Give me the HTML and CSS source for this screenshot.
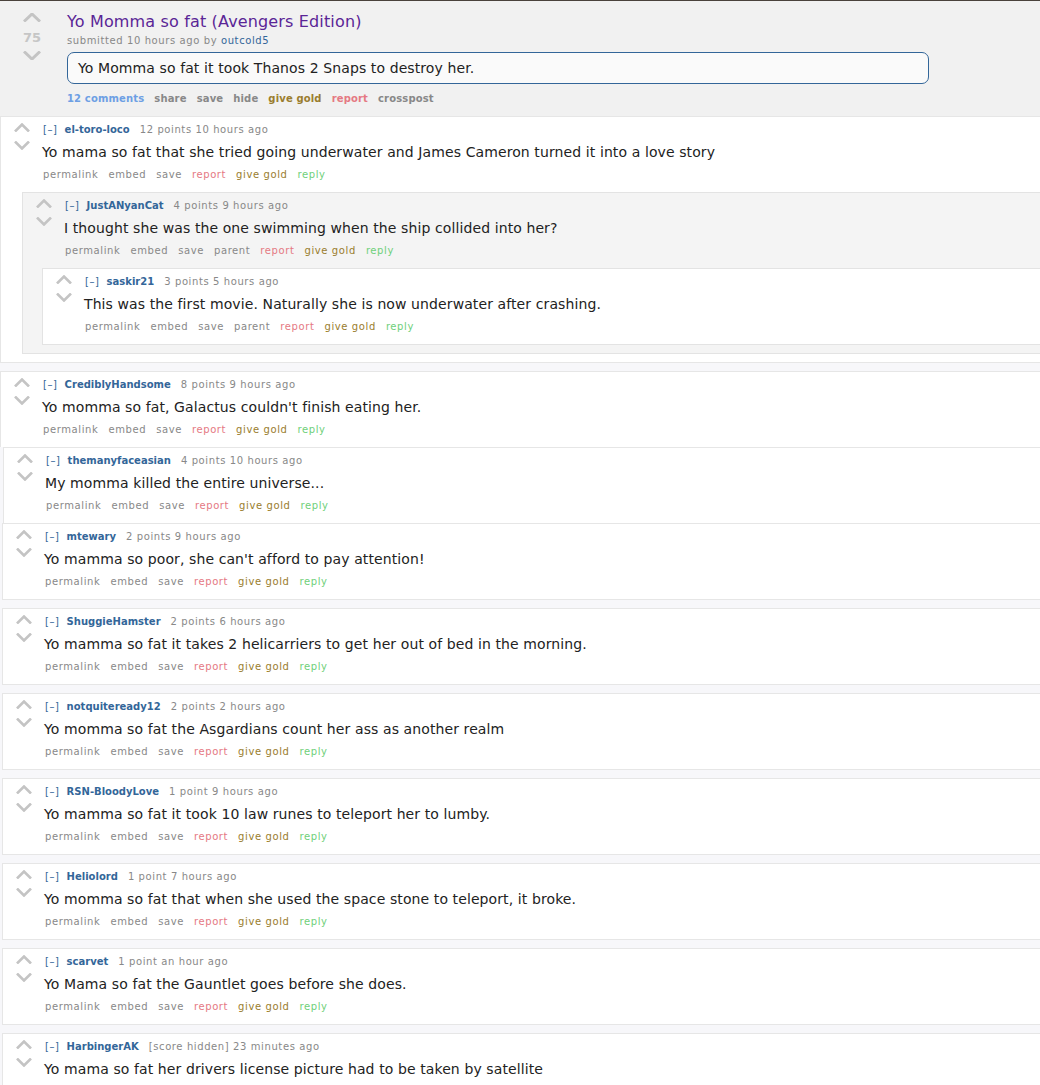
FILE: index.html
```html
<!DOCTYPE html>
<html lang="en">
<head>
    <meta charset="UTF-8">
    <title>Yo Momma so fat (Avengers Edition)</title>
    <link rel="stylesheet" href="styles.css">
</head>
<body>
    <div class="topline"></div>

    <div class="link">
        <div class="midcol">
            <svg class="big-arrow up" viewBox="0 0 18 9"><path d="M1 8.5 L9 1 L17 8.5"/></svg>
            <div class="score">75</div>
            <svg class="big-arrow down" viewBox="0 0 18 9"><path d="M1 0.5 L9 8 L17 0.5"/></svg>
        </div>
        <div class="link-entry">
            <a class="title" href="#">Yo Momma so fat (Avengers Edition)</a>
            <p class="submitted">submitted 10 hours ago by <a href="#">outcold5</a></p>
            <div class="expando">Yo Momma so fat it took Thanos 2 Snaps to destroy her.</div>
            <ul class="link-buttons">
                <li class="comments">12 comments</li>
                <li>share</li>
                <li>save</li>
                <li>hide</li>
                <li class="gold">give gold</li>
                <li class="report">report</li>
                <li>crosspost</li>
            </ul>
        </div>
    </div>

    <div class="comment-area">
        <!-- thread 1 -->
        <div class="thread">
            <div class="comment">
                <div class="entry">
                    <div class="votes">
                        <svg class="arrow" viewBox="0 0 16 9"><path d="M1 8.5 L8 1.5 L15 8.5"/></svg>
                        <svg class="arrow" viewBox="0 0 16 9"><path d="M1 0.5 L8 7.5 L15 0.5"/></svg>
                    </div>
                    <div class="entry-body">
                        <p class="tagline"><span class="expand">[&ndash;]</span><a class="author" href="#">el-toro-loco</a><span class="meta">12 points 10 hours ago</span></p>
                        <p class="md">Yo mama so fat that she tried going underwater and James Cameron turned it into a love story</p>
                        <ul class="buttons">
                            <li>permalink</li><li>embed</li><li>save</li><li class="report">report</li><li class="gold">give gold</li><li class="reply">reply</li>
                        </ul>
                    </div>
                </div>
                <div class="children">
                    <div class="comment child">
                        <div class="entry">
                            <div class="votes">
                                <svg class="arrow" viewBox="0 0 16 9"><path d="M1 8.5 L8 1.5 L15 8.5"/></svg>
                                <svg class="arrow" viewBox="0 0 16 9"><path d="M1 0.5 L8 7.5 L15 0.5"/></svg>
                            </div>
                            <div class="entry-body">
                                <p class="tagline"><span class="expand">[&ndash;]</span><a class="author" href="#">JustANyanCat</a><span class="meta">4 points 9 hours ago</span></p>
                                <p class="md">I thought she was the one swimming when the ship collided into her?</p>
                                <ul class="buttons">
                                    <li>permalink</li><li>embed</li><li>save</li><li>parent</li><li class="report">report</li><li class="gold">give gold</li><li class="reply">reply</li>
                                </ul>
                            </div>
                        </div>
                        <div class="children">
                            <div class="comment grandchild">
                                <div class="entry">
                                    <div class="votes">
                                        <svg class="arrow" viewBox="0 0 16 9"><path d="M1 8.5 L8 1.5 L15 8.5"/></svg>
                                        <svg class="arrow" viewBox="0 0 16 9"><path d="M1 0.5 L8 7.5 L15 0.5"/></svg>
                                    </div>
                                    <div class="entry-body">
                                        <p class="tagline"><span class="expand">[&ndash;]</span><a class="author" href="#">saskir21</a><span class="meta">3 points 5 hours ago</span></p>
                                        <p class="md">This was the first movie. Naturally she is now underwater after crashing.</p>
                                        <ul class="buttons">
                                            <li>permalink</li><li>embed</li><li>save</li><li>parent</li><li class="report">report</li><li class="gold">give gold</li><li class="reply">reply</li>
                                        </ul>
                                    </div>
                                </div>
                            </div>
                        </div>
                    </div>
                </div>
            </div>
        </div>

        <!-- thread 2 -->
        <div class="thread">
            <div class="comment flat">
                <div class="entry">
                    <div class="votes">
                        <svg class="arrow" viewBox="0 0 16 9"><path d="M1 8.5 L8 1.5 L15 8.5"/></svg>
                        <svg class="arrow" viewBox="0 0 16 9"><path d="M1 0.5 L8 7.5 L15 0.5"/></svg>
                    </div>
                    <div class="entry-body">
                        <p class="tagline"><span class="expand">[&ndash;]</span><a class="author" href="#">CrediblyHandsome</a><span class="meta">8 points 9 hours ago</span></p>
                        <p class="md">Yo momma so fat, Galactus couldn't finish eating her.</p>
                        <ul class="buttons">
                            <li>permalink</li><li>embed</li><li>save</li><li class="report">report</li><li class="gold">give gold</li><li class="reply">reply</li>
                        </ul>
                    </div>
                </div>
            </div>
            <div class="comment flat shift-3">
                <div class="entry">
                    <div class="votes">
                        <svg class="arrow" viewBox="0 0 16 9"><path d="M1 8.5 L8 1.5 L15 8.5"/></svg>
                        <svg class="arrow" viewBox="0 0 16 9"><path d="M1 0.5 L8 7.5 L15 0.5"/></svg>
                    </div>
                    <div class="entry-body">
                        <p class="tagline"><span class="expand">[&ndash;]</span><a class="author" href="#">themanyfaceasian</a><span class="meta">4 points 10 hours ago</span></p>
                        <p class="md">My momma killed the entire universe...</p>
                        <ul class="buttons">
                            <li>permalink</li><li>embed</li><li>save</li><li class="report">report</li><li class="gold">give gold</li><li class="reply">reply</li>
                        </ul>
                    </div>
                </div>
            </div>
            <div class="comment shift-2">
                <div class="entry">
                    <div class="votes">
                        <svg class="arrow" viewBox="0 0 16 9"><path d="M1 8.5 L8 1.5 L15 8.5"/></svg>
                        <svg class="arrow" viewBox="0 0 16 9"><path d="M1 0.5 L8 7.5 L15 0.5"/></svg>
                    </div>
                    <div class="entry-body">
                        <p class="tagline"><span class="expand">[&ndash;]</span><a class="author" href="#">mtewary</a><span class="meta">2 points 9 hours ago</span></p>
                        <p class="md">Yo mamma so poor, she can't afford to pay attention!</p>
                        <ul class="buttons">
                            <li>permalink</li><li>embed</li><li>save</li><li class="report">report</li><li class="gold">give gold</li><li class="reply">reply</li>
                        </ul>
                    </div>
                </div>
            </div>
        </div>

        <div class="thread">
            <div class="comment shift-2">
                <div class="entry">
                    <div class="votes">
                        <svg class="arrow" viewBox="0 0 16 9"><path d="M1 8.5 L8 1.5 L15 8.5"/></svg>
                        <svg class="arrow" viewBox="0 0 16 9"><path d="M1 0.5 L8 7.5 L15 0.5"/></svg>
                    </div>
                    <div class="entry-body">
                        <p class="tagline"><span class="expand">[&ndash;]</span><a class="author" href="#">ShuggieHamster</a><span class="meta">2 points 6 hours ago</span></p>
                        <p class="md">Yo mamma so fat it takes 2 helicarriers to get her out of bed in the morning.</p>
                        <ul class="buttons">
                            <li>permalink</li><li>embed</li><li>save</li><li class="report">report</li><li class="gold">give gold</li><li class="reply">reply</li>
                        </ul>
                    </div>
                </div>
            </div>
        </div>

        <div class="thread">
            <div class="comment shift-2">
                <div class="entry">
                    <div class="votes">
                        <svg class="arrow" viewBox="0 0 16 9"><path d="M1 8.5 L8 1.5 L15 8.5"/></svg>
                        <svg class="arrow" viewBox="0 0 16 9"><path d="M1 0.5 L8 7.5 L15 0.5"/></svg>
                    </div>
                    <div class="entry-body">
                        <p class="tagline"><span class="expand">[&ndash;]</span><a class="author" href="#">notquiteready12</a><span class="meta">2 points 2 hours ago</span></p>
                        <p class="md">Yo momma so fat the Asgardians count her ass as another realm</p>
                        <ul class="buttons">
                            <li>permalink</li><li>embed</li><li>save</li><li class="report">report</li><li class="gold">give gold</li><li class="reply">reply</li>
                        </ul>
                    </div>
                </div>
            </div>
        </div>

        <div class="thread">
            <div class="comment shift-2">
                <div class="entry">
                    <div class="votes">
                        <svg class="arrow" viewBox="0 0 16 9"><path d="M1 8.5 L8 1.5 L15 8.5"/></svg>
                        <svg class="arrow" viewBox="0 0 16 9"><path d="M1 0.5 L8 7.5 L15 0.5"/></svg>
                    </div>
                    <div class="entry-body">
                        <p class="tagline"><span class="expand">[&ndash;]</span><a class="author" href="#">RSN-BloodyLove</a><span class="meta">1 point 9 hours ago</span></p>
                        <p class="md">Yo mamma so fat it took 10 law runes to teleport her to lumby.</p>
                        <ul class="buttons">
                            <li>permalink</li><li>embed</li><li>save</li><li class="report">report</li><li class="gold">give gold</li><li class="reply">reply</li>
                        </ul>
                    </div>
                </div>
            </div>
        </div>

        <div class="thread">
            <div class="comment shift-2">
                <div class="entry">
                    <div class="votes">
                        <svg class="arrow" viewBox="0 0 16 9"><path d="M1 8.5 L8 1.5 L15 8.5"/></svg>
                        <svg class="arrow" viewBox="0 0 16 9"><path d="M1 0.5 L8 7.5 L15 0.5"/></svg>
                    </div>
                    <div class="entry-body">
                        <p class="tagline"><span class="expand">[&ndash;]</span><a class="author" href="#">Heliolord</a><span class="meta">1 point 7 hours ago</span></p>
                        <p class="md">Yo momma so fat that when she used the space stone to teleport, it broke.</p>
                        <ul class="buttons">
                            <li>permalink</li><li>embed</li><li>save</li><li class="report">report</li><li class="gold">give gold</li><li class="reply">reply</li>
                        </ul>
                    </div>
                </div>
            </div>
        </div>

        <div class="thread">
            <div class="comment shift-2">
                <div class="entry">
                    <div class="votes">
                        <svg class="arrow" viewBox="0 0 16 9"><path d="M1 8.5 L8 1.5 L15 8.5"/></svg>
                        <svg class="arrow" viewBox="0 0 16 9"><path d="M1 0.5 L8 7.5 L15 0.5"/></svg>
                    </div>
                    <div class="entry-body">
                        <p class="tagline"><span class="expand">[&ndash;]</span><a class="author" href="#">scarvet</a><span class="meta">1 point an hour ago</span></p>
                        <p class="md">Yo Mama so fat the Gauntlet goes before she does.</p>
                        <ul class="buttons">
                            <li>permalink</li><li>embed</li><li>save</li><li class="report">report</li><li class="gold">give gold</li><li class="reply">reply</li>
                        </ul>
                    </div>
                </div>
            </div>
        </div>

        <div class="thread">
            <div class="comment shift-2">
                <div class="entry">
                    <div class="votes">
                        <svg class="arrow" viewBox="0 0 16 9"><path d="M1 8.5 L8 1.5 L15 8.5"/></svg>
                        <svg class="arrow" viewBox="0 0 16 9"><path d="M1 0.5 L8 7.5 L15 0.5"/></svg>
                    </div>
                    <div class="entry-body">
                        <p class="tagline"><span class="expand">[&ndash;]</span><a class="author" href="#">HarbingerAK</a><span class="meta">[score hidden] 23 minutes ago</span></p>
                        <p class="md">Yo mama so fat her drivers license picture had to be taken by satellite</p>
                    </div>
                </div>
            </div>
        </div>
    </div>
</body>
</html>
```

FILE: styles.css
```css
:root {
    --link-blue: #336699;
    --muted: #888888;
    --border: #e6e6e6;
    --arrow: #c4c4c4;
    --gold: #9a7d2e;
    --report: #e57983;
    --reply: #6fd07a;
}

* {
    margin: 0;
    padding: 0;
    box-sizing: border-box;
}

body {
    background-color: #f7f7fa;
    font-family: 'DejaVu Sans', Verdana, sans-serif;
    color: #222222;
    overflow: hidden;
}

a {
    text-decoration: none;
}

ul {
    list-style: none;
}

.topline {
    height: 1px;
    background-color: #4a423c;
}

/* link header */

.link {
    display: flex;
    background-color: #f1f1f1;
    padding: 11px 0 11px;
}

.midcol {
    width: 18px;
    margin-left: 23px;
    margin-right: 26px;
    display: flex;
    flex-direction: column;
    align-items: center;
    padding-top: 1px;
}

.big-arrow {
    width: 18px;
    height: 9px;
    fill: none;
    stroke: var(--arrow);
    stroke-width: 3;
}

.score {
    font-size: 13px;
    font-weight: bold;
    color: #c6c6c6;
    line-height: 15px;
    margin: 8px 0 6px;
}

.link-entry {
    flex: 1;
}

.title {
    display: block;
    font-size: 16px;
    line-height: 20px;
    letter-spacing: 0.15px;
    color: #5a2596;
}

.submitted {
    font-size: 10px;
    line-height: 13px;
    letter-spacing: 0.6px;
    margin-top: 2px;
    color: var(--muted);
}

.submitted a {
    color: var(--link-blue);
}

.expando {
    width: 862px;
    margin-top: 5px;
    background-color: #fafafa;
    border: 1px solid var(--link-blue);
    border-radius: 7px;
    padding: 5px 10px;
    font-size: 14px;
    line-height: 20px;
    letter-spacing: 0.1px;
}

.link-buttons {
    display: flex;
    gap: 10px;
    margin-top: 8px;
    font-size: 10px;
    line-height: 13px;
    font-weight: bold;
    letter-spacing: 0.15px;
    color: var(--muted);
}

.link-buttons .comments {
    color: #6d9fe4;
}

/* comments */

.thread + .thread {
    margin-top: 8px;
}

.comment {
    background-color: #ffffff;
    border-top: 1px solid var(--border);
    border-left: 1px solid var(--border);
    border-bottom: 1px solid var(--border);
}

.comment.flat {
    border-bottom: none;
}

.shift-3 {
    margin-left: 3px;
}

.shift-2 {
    margin-left: 2px;
}

.comment.child {
    background-color: #f4f4f4;
    border-color: #e3e3e3;
}

.comment.grandchild {
    background-color: #ffffff;
    border-color: #e3e3e3;
}

.children {
    padding: 0 0 8px 21px;
}

.child .children {
    padding-left: 19px;
}

.entry {
    display: flex;
    padding: 6px 0 11px;
}

.votes {
    width: 16px;
    margin-left: 13px;
    margin-right: 12px;
    display: flex;
    flex-direction: column;
    gap: 9px;
}

.arrow {
    width: 16px;
    height: 9px;
    fill: none;
    stroke: var(--arrow);
    stroke-width: 2.6;
}

.entry-body {
    flex: 1;
}

.tagline {
    font-size: 10px;
    line-height: 13px;
    color: var(--muted);
    padding-left: 1px;
}

.tagline .expand {
    color: var(--link-blue);
    letter-spacing: 0.6px;
    margin-right: 7px;
}

.tagline .author {
    color: var(--link-blue);
    font-weight: bold;
    margin-right: 10px;
}

.tagline .meta {
    letter-spacing: 0.6px;
}

.md {
    font-size: 14px;
    line-height: 20px;
    letter-spacing: 0.1px;
    margin-top: 6px;
    color: #222222;
}

.buttons {
    display: flex;
    gap: 10px;
    margin-top: 6px;
    padding-left: 1px;
    font-size: 10px;
    line-height: 13px;
    letter-spacing: 0.6px;
    color: var(--muted);
}

.report {
    color: var(--report);
}

.gold {
    color: var(--gold);
}

.reply {
    color: var(--reply);
}
```
